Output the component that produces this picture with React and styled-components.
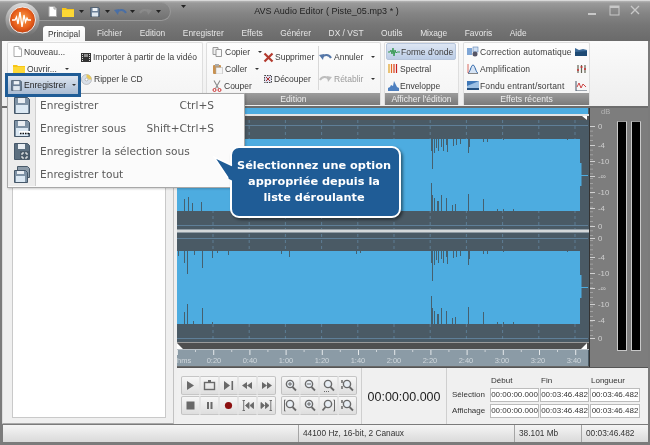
import React from "react";
import styled, { createGlobalStyle } from "styled-components";

const Global = createGlobalStyle`
  html, body { margin: 0; padding: 0; background: #777; }
  * { box-sizing: border-box; }
`;

const UI = `"Liberation Sans", Arial, sans-serif`;
const WIDE = `"DejaVu Sans", Verdana, sans-serif`;

const Win = styled.div`
  position: relative; width: 650px; height: 445px; overflow: hidden;
  display: flex; flex-direction: column; filter: blur(0.3px);
  background: #7b7b7b; font-family: ${UI}; font-size: 8.5px; color: #3a3a3a;
`;

/* ---------- title bar ---------- */
const TitleBar = styled.div`
  height: 25px; flex: none; display: flex; align-items: flex-start; position: relative;
  background: linear-gradient(#b5b5b5 0, #9a9a9a 2px, #858585 12px, #767676 100%);
  border-top: 1px solid #d8d8d8;
`;
const LogoWrap = styled.div`
  position: absolute; left: 5px; top: 1px; z-index: 3; width: 36px; height: 36px;
`;
const Quick = styled.div`
  margin-left: 28px; margin-top: 1px; width: 143px; height: 19px; padding-left: 19px;
  display: flex; align-items: center;
  background: linear-gradient(#8b8b8b, #717171);
  border: 1px solid #989898; border-left: none; border-radius: 0 10px 10px 0;
`;
const QuickIcon = styled.span`
  display: inline-flex; width: ${p => p.$w}px; justify-content: center; align-items: center; opacity: ${p => p.$dim ? 0.45 : 1};
`;
const Custom = styled.span`
  display: inline-flex; margin: 4px 0 0 10px; 
`;
const Title = styled.div`
  position: absolute; left: 0; right: 0; top: 5px; text-align: center; padding-left: 3px;
  font-size: 9px; color: #222; letter-spacing: 0.05px;
`;
const Controls = styled.div`
  margin-left: auto; margin-right: 8px; margin-top: 3px; display: flex; gap: 8px; align-items: center;
`;

/* ---------- tabs ---------- */
const Tabs = styled.div`
  height: 16px; flex: none; padding-left: 43px; display: flex; align-items: flex-end;
  background: linear-gradient(#767676, #6a6a6a);
`;
const Tab = styled.div`
  height: ${p => p.$on ? 15 : 16}px; display: flex; align-items: center; padding: 0 ${p => p.$on ? 5 : 8.8}px; 
  margin-right: ${p => p.$on ? 3 : 0}px;
  font-size: 8.4px; white-space: nowrap;
  color: ${p => p.$on ? "#333" : "#e6e6e6"};
  background: ${p => p.$on ? "linear-gradient(#ffffff, #f4f4f4)" : "transparent"};
  border-radius: ${p => p.$on ? "3px 3px 0 0" : 0};
`;

/* ---------- ribbon ---------- */
const Ribbon = styled.div`
  height: 67px; flex: none; margin: 0 2px; padding: 1px 0 0 5px; display: flex;
  background: linear-gradient(#fafafa, #eeeeee);
  border-bottom: 2px solid #6c6c6c;
`;
const Group = styled.div`
  width: ${p => p.$w}px; margin-right: ${p => p.$mr}px; height: 63px; display: flex; flex-direction: column;
  border: 1px solid #dedede; border-bottom: none; border-radius: 2px 2px 0 0;
  background: linear-gradient(#fdfdfd, #f3f3f3);
`;
const GroupBody = styled.div`
  height: 50px; flex: none; display: flex; padding-left: ${p => p.$pl || 5}px; letter-spacing: ${p => p.$ls || 0}px;
`;
const GroupLabel = styled.div`
  height: 12px; flex: none; text-align: center; line-height: 12px; font-size: 8.6px; color: #eee;
  background: linear-gradient(#9c9c9c, #7a7a7a);
`;
const Col = styled.div`
  width: ${p => p.$w}px; flex: none; display: flex; flex-direction: column; justify-content: ${p => p.$two ? "center" : "flex-start"};
  border-right: ${p => p.$div ? "1px solid #d8d8d8" : "none"};
  margin: ${p => p.$div ? "3px 0" : 0};
`;
const Item = styled.div`
  height: ${p => p.$two ? 22 : 17}px; flex: none; display: flex; align-items: center; gap: ${p => p.$gap ?? 2}px; white-space: nowrap;
  color: ${p => p.$dim ? "#9a9a9a" : "#3a3a3a"};
  ${p => p.$on ? `
    background: linear-gradient(#dde6f3, #bccde6); border: 1px solid #b7c6dc; border-radius: 2px; margin-left: -2px; padding-left: 1px; width: 70px;
  ` : ""}
`;
const Drop = styled.span`
  width: 0; height: 0; margin-left: ${p => p.$ml || 6}px; border: 2px solid transparent; border-top: 2.5px solid #333; border-bottom: none;
`;
const Push = styled.span` margin-left: auto; display: inline-flex; padding-right: 2px; `;
/* the picked ribbon button: its blue frame reaches over the group edge and the menu */
const Picked = styled.div`
  position: relative; z-index: 6; flex: none; width: 76px; height: 24px; margin: -4px 0 -3px -8px;
  border: 3px solid #1f5c96; display: flex; align-items: center; gap: 2px; padding-left: 3px; font-size: 8.6px; color: #222; white-space: nowrap;
  background: linear-gradient(#dde5f0, #a9bbd2);
`;

/* ---------- main ---------- */
const Main = styled.div`
  flex: 1; min-height: 0; display: flex; margin: 0 2px 0 2px; background: #efefef;
`;
const LeftPane = styled.div`
  width: 172px; flex: none; padding: 3px 7px 5px 9px; margin-right: 3px; background: #efefef; border: 1px solid #c2c2c2; border-top: none; border-bottom: 1px solid #aaa; border-left-color:#ddd;
`;
const WhiteBox = styled.div`
  height: 100%; background: #fff; border: 1px solid #c9c9c9;
`;
const RightCol = styled.div`
  flex: 1; min-width: 0; display: flex; flex-direction: column;
`;
const TopArea = styled.div`
  height: 260px; flex: none; display: flex; border-bottom: 1px solid #555; background:#7d7d7d;
`;
const WaveSvg = styled.svg`
  display: block; width: 412px; height: 259px; flex: none;
`;
const Meter = styled.div`
  flex: 1; display: flex; background: #7d7d7d; border-left: 1px solid #333; padding-right: 2px;
`;
const ScaleSvg = styled.svg`
  display: block; width: 27px; height: 259px; flex: none;
`;
const MeterBar = styled.div`
  width: 10px; flex: none; height: 230px; margin: 13px ${p => p.$mr}px 0 0; background: #000; border: 1px solid #c9c9c9; border-top-color:#999;
`;

/* ---------- transport ---------- */
const Transport = styled.div`
  flex: 1; display: flex; background: #f0f0f0; padding-right: 2px;
`;
const PadArea = styled.div`
  width: 185px; flex: none; display: flex; gap: 5px; padding: 8px 0 0 4px; border-right: 1px solid #cfcfcf;
`;
const BtnGrid = styled.div`
  display: grid; grid-template-columns: repeat(${p => p.$n}, 19px); grid-auto-rows: 19px; row-gap: 1px; height: 39px;
`;
const Btn = styled.div`
  display: flex; align-items: center; justify-content: center;
  background: linear-gradient(#f7f7f7, #dedede);
  border: 1px solid #c6c6c6; border-left-color: #e4e4e4; border-right-color: #e4e4e4;
  &:nth-child(${p => p.$n}n+1) { border-left-color: #c0c0c0; border-radius: 2px 0 0 2px; }
  &:nth-child(${p => p.$n}n) { border-right-color: #c0c0c0; border-radius: 0 2px 2px 0; }
`;
const Clock = styled.div`
  width: 85px; flex: none; display: flex; align-items: center; justify-content: center; padding-top: 1px;
  font-size: 12.5px; color: #222; border-right: 1px solid #cfcfcf;
`;
const Times = styled.div`
  flex: 1; display: grid; grid-template-columns: 37px 49px 49px 50px; column-gap: 1px; grid-template-rows: 14px 15px 15px; padding: 4px 0 0 5px; align-items: center; row-gap: 1px;
  font-size: 8px;
`;
const THead = styled.div` padding-left: 1px; padding-top: 2px; color: #333; `;
const TLabel = styled.div` text-align: right; padding-right: 6px; color: #333; `;
const Field = styled.div`
  height: 14px; line-height: 12px; background: #fff; border: 1px solid #bcbcbc; text-align: center; font-size: 8px; color: #333; white-space: nowrap;
`;

/* ---------- status ---------- */
const Status = styled.div`
  height: 17px; flex: none; margin: 1px 2px 3px 3px; display: flex; font-size: 8.3px; color: #333;
  background: linear-gradient(#f5f5f5, #dadada);
`;
const Cell = styled.div`
  width: ${p => p.$w}px; flex: ${p => p.$w ? "none" : 1}; padding-left: 4px; line-height: 17px; white-space: nowrap;
  border-left: ${p => p.$w ? "1px solid #a5a5a5" : "none"};
`;

/* ---------- overlays ---------- */
const Menu = styled.div`
  position: absolute; left: 7px; top: 93px; width: 238px; height: 95px; z-index: 5;
  background: #fbfbfb; border: 1px solid #a8a8a8;
  box-shadow: 1px 1px 2px rgba(0,0,0,.2);
`;
const MenuRow = styled.div`
  height: 23px; display: flex; align-items: center; font-family: ${WIDE}; font-size: 10.6px; color: #5a5a5a;
  padding-right: 30px;
`;
const MenuText = styled.span` margin-top: -1px; `;
const Gutter = styled.div`
  width: 28px; height: 23px; flex: none; margin-right: 4px; display: flex; align-items: center; justify-content: center;
  background: #ececec; border-right: 1px solid #cfcfcf;
`;
const Short = styled.span` margin-left: auto; margin-top: -1px; `;
const Callout = styled.div`
  position: absolute; left: 230px; top: 146px; width: 171px; height: 72px; z-index: 7; padding-right: 3px;
  display: flex; align-items: center; justify-content: center; text-align: center;
  font-family: ${WIDE}; font-size: 11.3px; font-weight: 700; line-height: 16px; color: #fff;
  background: #1f5c96; border: 2px solid #fff; border-radius: 9px; box-shadow: 2px 2px 3px rgba(0,0,0,.45);
`;
const Tail = styled.svg`
  position: absolute; left: -19px; top: 8px; width: 20px; height: 30px;
`;

/* ---------- icons ---------- */
const S = ({ w = 10, h = 10, vb, children }) => (
  <svg width={w} height={h} viewBox={vb || `0 0 ${w} ${h}`} style={{ flex: "none", display: "block" }}>{children}</svg>
);
const Doc = () => <S w={9} h={11}><path d="M1 .5h5l2.500 2.500v7.500h-7.500z" fill="#fff" stroke="#aaa" /><path d="M6 .5v2.500h2.500" fill="#ddd" stroke="#aaa" /></S>;
const Folder = ({ w = 12, h = 10 }) => <S w={w} h={h} vb="0 0 12 10"><path d="M0 1h4l1 1h7v8H0z" fill="#f7c516" /><path d="M0 3h12v7H0z" fill="#fdd835" /></S>;
const Floppy = ({ s = 10, c = "#6b7f96" }) => <S w={s} h={s} vb="0 0 10 10"><path d="M.5.5h8l1 1v8h-9z" fill={c} stroke="#3f4f60" strokeWidth=".6" /><rect x="2.500" y="1" width="5" height="3" fill="#eef2f6" /><rect x="2" y="5.500" width="6" height="4" fill="#dfe7ef" /></S>;
const Film = () => <S w={10} h={11}><rect y="1" width="10" height="9" fill="#333" /><path d="M1 2h1v1H1zm0 2h1v1H1zm0 2h1v1H1zm0 2h1v1H1zm7-6h1v1H8zm0 2h1v1H8zm0 2h1v1H8zm0 2h1v1H8z" fill="#ddd" /><rect x="3" y="2" width="4" height="3" fill="#8a8a8a" /></S>;
const Cd = () => <S w={11} h={11}><circle cx="5.500" cy="5.500" r="5" fill="#d8dfe8" stroke="#999" strokeWidth=".5" /><path d="M5.500 .5a5 5 0 0 1 5 5h-3a2 2 0 0 0-2-2z" fill="#e8c95a" /><circle cx="5.500" cy="5.500" r="1.400" fill="#fff" stroke="#888" strokeWidth=".5" /></S>;
const Copy = () => <S w={11} h={11}><path d="M1 1.500h5v7H1z" fill="#eee" stroke="#999" /><path d="M4 3.500h5.500v7H4z" fill="#fafafa" stroke="#999" /></S>;
const Paste = () => <S w={11} h={11}><rect x="1" y="2" width="8" height="9" rx="1" fill="#c8914f" /><rect x="3" y="1" width="4" height="2.500" fill="#aaa" /><rect x="4" y="4.500" width="6.500" height="6.500" fill="#f4f4f4" stroke="#aaa" strokeWidth=".5" /></S>;
const Scissors = () => <S w={10} h={12}><path d="M2 .5l4.500 8M8 .5l-4.500 8" stroke="#8b8b8b" strokeWidth="1.100" fill="none" /><circle cx="2.500" cy="10" r="1.500" fill="none" stroke="#c33" strokeWidth="1" /><circle cx="7.500" cy="10" r="1.500" fill="none" stroke="#c33" strokeWidth="1" /></S>;
const Del = () => <S w={11} h={11}><path d="M1.500 1.500l8 8M9.500 1.500l-8 8" stroke="#b33a2e" strokeWidth="2.200" /></S>;
const Trim = () => <S w={10} h={10}><rect x="1.500" y="1.500" width="7" height="7" fill="#dde" stroke="#444" strokeWidth="1" strokeDasharray="1.500 1" /><path d="M3 3l4 4M7 3l-4 4" stroke="#a33" strokeWidth="1" /></S>;
const Undo = ({ c = "#4a6fa5" }) => <S w={13} h={10}><path d="M3 5.500c2-3.500 7-3.500 9 .5" fill="none" stroke={c} strokeWidth="2" /><path d="M0 3l5-1-1 6z" fill={c} /></S>;
const Redo = ({ c = "#bdbdbd" }) => <S w={13} h={10}><path d="M10 5.500c-2-3.500-7-3.500-9 .5" fill="none" stroke={c} strokeWidth="2" /><path d="M13 3L8 2l1 6z" fill={c} /></S>;
const WaveI = () => <S w={12} h={10}><path d="M0 5h2l1-2 1 4 1-6 1 8 1-6 1 3 1-1h3" fill="none" stroke="#3a9b55" strokeWidth="1" /></S>;
const Spec = () => <S w={11} h={11}><path d="M1 1v9" stroke="#e0a020" strokeWidth="1.200" /><path d="M3.500 1v9" stroke="#e66a20" strokeWidth="1.200" /><path d="M6 1v9" stroke="#d8401c" strokeWidth="1.200" /><path d="M8.500 1v9" stroke="#c82020" strokeWidth="1.200" /></S>;
const Env = () => <S w={11} h={10}><path d="M0 10V7l2-1 1-2 2 1 1-5 2 4 1 2 2 1v3z" fill="#4e80c0" /></S>;
const Auto = () => <S w={12} h={11}><rect x="0" y="2" width="5" height="7" fill="#7fa6d6" /><rect x="6" y="1" width="5" height="5" fill="#cfdff2" stroke="#5a7fb0" strokeWidth=".6" /><circle cx="8" cy="8" r="2.500" fill="#556" /></S>;
const Ampl = () => <S w={12} h={11}><path d="M1 10.500h10" stroke="#888" /><path d="M1 10c2 0 3-8 5-8s3 8 5 8" fill="#d6e4f5" stroke="#2b62a6" /><path d="M1 1v9" stroke="#d0473a" strokeWidth=".8" /></S>;
const Fade = () => <S w={12} h={9}><rect width="12" height="9" fill="#3f78b8" /><path d="M0 9V5l12-5v9z" fill="#9cc0e4" /><rect y="7" width="12" height="2" fill="#24507f" /></S>;
const Side = ({ k }) => k === 0
  ? <S w={12} h={10}><path d="M0 1l4 2 4-1 4 1v6H0z" fill="#3d6b99" /><path d="M0 5l12-1v5H0z" fill="#1e4a74" /></S>
  : k === 1
    ? <S w={11} h={10}><path d="M2 1v8M5.500 1v8M9 1v8" stroke="#665" strokeWidth="1.200" /><path d="M1 6h2M4.500 3h2M8 5h2" stroke="#c33" strokeWidth="1.600" /></S>
    : <S w={12} h={10}><path d="M1 0v10h11" stroke="#456" fill="none" /><path d="M2 6l2-4 2 5 2-4 3 3" stroke="#c44" fill="none" /></S>;

const BigFloppy = ({ kind }) => (
  <S w={16} h={17}>
    {kind === 3 && <path d="M3.500.5h10l2 2v9h-12z" fill="#8d9caa" stroke="#4a5b6a" />}
    <path d={kind === 3 ? "M.5 4.500h11l2 2v10H.5z" : "M.5.5h13l2 2v14H.5z"} fill={kind === 2 ? "#5c6f80" : "#7e92a5"} stroke="#46586a" />
    <rect x={kind === 3 ? 3 : 4} y={kind === 3 ? 5 : 1} width="7" height={kind === 3 ? 3 : 5} fill="#e9eef3" />
    {kind !== 2 && <rect x="2" y={kind === 3 ? 10 : 8} width={kind === 3 ? 9 : 12} height={kind === 3 ? 6 : 8} fill="#dbe8f3" />}
    {kind === 1 && <rect x="5" y="11" width="11" height="2" fill="#fff" />}
    {kind === 1 && <path d="M6 13.500h10" stroke="#111" strokeWidth="1.400" strokeDasharray="1.500 1" />}
    {kind === 2 && <g><rect x="6" y="8" width="9" height="9" fill="#4a5a68" /><path d="M8 12v-2h2M13 12v-2h-2M8 13v2h2M13 13v2h-2" stroke="#fff" fill="none" /></g>}
  </S>
);

const ic = "#696969";
const TIcon = ({ k }) => {
  const d = {
    play: <path d="M3 2l7 4.500L3 11z" fill={ic} />,
    loop: <g><rect x="1.500" y="3.500" width="10" height="7" fill="none" stroke={ic} strokeWidth="1.400" /><path d="M5 1h3v3H5z" fill={ic} /></g>,
    next: <g><path d="M2 2l6 4.500L2 11z" fill={ic} /><rect x="9.500" y="2" width="1.600" height="9" fill={ic} /></g>,
    rew: <path d="M6 3v7L1 6.500zM11 3v7L6 6.500z" fill={ic} />,
    ff: <path d="M2 3v7l5-3.500zM7 3v7l5-3.500z" fill={ic} />,
    stop: <rect x="2.500" y="2.500" width="8" height="8" fill={ic} />,
    pause: <path d="M4 3h2v7H4zM7.500 3h2v7h-2z" fill={ic} />,
    rec: <circle cx="6.500" cy="6.500" r="3.600" fill="#8c1010" />,
    first: <path d="M1.500 1.500h2.500M2.700 1.500v10M1.500 11.500h2.500M8 3.500v6L4.500 6.500zM12.500 3.500v6L9 6.500z" fill={ic} stroke={ic} strokeWidth=".9" />,
    last: <path d="M9.500 1.500h2.500M10.800 1.500v10M9.500 11.500h2.500M1 3.500v6l3.500-3zM5.500 3.500v6l3.500-3z" fill={ic} stroke={ic} strokeWidth=".9" />,
  }[k];
  return <S w={13} h={13}>{d}</S>;
};
const Mag = ({ k }) => (
  <S w={13} h={13}>
    <circle cx="6" cy="5" r="3.600" fill="#e8eef4" stroke={ic} strokeWidth="1.400" />
    {k === "r" ? <path d="M3.500 8l-3 3.500" stroke={ic} strokeWidth="1.800" /> : <path d="M8.500 8l3.500 3.500" stroke={ic} strokeWidth="1.800" />}
    {k === "in" && <path d="M4 5h4M6 3v4" stroke={ic} />}
    {k === "out" && <path d="M4 5h4" stroke={ic} />}
    {k === "sel" && <path d="M2 12.500h6" stroke={ic} strokeDasharray="1 1" />}
    {k === "v" && <path d="M1 1v3M1 7v3" stroke={ic} strokeWidth="1.500" />}
    {k === "l" && <path d="M1.500 1H.5v11h1" stroke={ic} fill="none" />}
    {k === "r" && <path d="M11.500 1h1v11h-1" stroke={ic} fill="none" />}
  </S>
);

const Logo = () => (
  <svg width="36" height="36" viewBox="0 0 36 36">
    <defs>
      <radialGradient id="lo" cx=".5" cy=".45" r=".6"><stop offset="0" stopColor="#f9a450" /><stop offset=".6" stopColor="#e8601c" /><stop offset="1" stopColor="#b8380c" /></radialGradient>
      <linearGradient id="ri" x1="0" y1="0" x2="0" y2="1"><stop offset="0" stopColor="#dcdcdc" /><stop offset="1" stopColor="#6a6a6a" /></linearGradient>
    </defs>
    <circle cx="17.500" cy="18" r="17" fill="url(#ri)" />
    <circle cx="17.500" cy="18" r="13" fill="url(#lo)" stroke="#eee" strokeWidth="1" />
    <path d="M7 18h3l1.500-3 1.500 7 2-12 2 15 2-12 1.500 7 1.500-4 1 2h3" fill="none" stroke="#fff" strokeWidth="1.300" />
  </svg>
);
const Arrow = ({ c = "#222" }) => <S w={5} h={3}><path d="M0 0h5L2.500 3z" fill={c} /></S>;

/* ---------- waveform ---------- */
const range = (a, n, s) => Array.from({ length: n }, (_, i) => a + i * s);
const spikesTop = [[431,12],[432,30],[434,14],[436,9],[438,12],[441,8],[443,12],[446,6],[447,13],[453,7],[456,6],[460,5],[468,14],[469,8],[483,3],[487,3],[503,1],[567,1]];
const spikesBot = [[184,12],[188,14],[192,8],[201,9],[431,28],[432,16],[434,13],[437,10],[438,10],[441,16],[446,13],[452,6],[455,7],[468,17],[483,12],[497,2],[503,2],[513,2]];
const spikes2Top = [[178,5],[184,12],[187,23],[194,4],[202,17],[212,7],[217,2],[228,4],[281,3],[289,6],[356,3],[360,2],...spikesTop];
const spikes2Bot = [[184,12],[187,20],[193,3],[202,16],[212,2],...spikesBot.slice(4)];
const Slate = "#4a5a65";
const Blue = "#4dace0";

const Wave = () => (
  <WaveSvg viewBox="177 110 412 259">
    <rect x="177" y="110" width="412" height="259" fill={Slate} />
    <rect x="177" y="110" width="411" height="6" fill={Blue} />
    <rect x="177" y="116" width="412" height="2" fill="#e5e5e5" />
    <rect x="177" y="118" width="412" height="4" fill="#545454" />
    <path d="M582 118h5v4z" fill="#fff" />
    {[127, 227, 240, 340].map(y => <rect key={y} x="177" y={y} width="411" height="1" fill="#5f7f98" />)}
    {range(213, 11, 36.2).map(x => <line key={x} x1={x} x2={x} y1="122" y2="344" stroke="#6a94b4" strokeDasharray="3 3" strokeWidth="1" opacity=".6" />)}
    <rect x="177" y="141" width="403" height="72" fill={Blue} />
    <rect x="177" y="253" width="403" height="73" fill={Blue} />
    <rect x="580" y="165" width="1.500" height="23" fill={Blue} />
    <rect x="580" y="277" width="1.500" height="23" fill={Blue} />
    <rect x="580" y="177" width="8" height="1" fill={Blue} />
    <rect x="580" y="289" width="8" height="1" fill={Blue} />
    {spikesTop.map(([x, l]) => <rect key={x} x={x} y="141" width="1" height={l} fill="#46606f" />)}
    {spikesBot.map(([x, l]) => <rect key={x} x={x} y={213 - l} width="1" height={l} fill="#46606f" />)}
    {spikes2Top.map(([x, l]) => <rect key={x} x={x} y="253" width="1" height={l} fill="#46606f" />)}
    {spikes2Bot.map(([x, l]) => <rect key={x} x={x} y={326 - l} width="1" height={l} fill="#46606f" />)}
    <rect x="177" y="231" width="412" height="1" fill="#8f9ba4" />
    <rect x="177" y="232" width="412" height="2" fill="#d4d8da" />
    <rect x="177" y="234" width="412" height="1" fill="#8f9ba4" />
    <rect x="177" y="344" width="412" height="1" fill="#9a9a9a" />
    <rect x="177" y="345" width="412" height="6" fill="#4f4f4f" />
    <path d="M177 345l6 6h-6zM587 345l-6 6h6z" fill="#fff" />
    <rect x="177" y="351" width="412" height="1" fill="#b8c0c6" />
    <rect x="177" y="352" width="411" height="16" fill="#8b9ba6" />
    {range(177, 12, 36.2).map(x => <rect key={x} x={x} y="352" width="1" height="5" fill="#e4e8ea" />)}
    {range(195, 12, 36.2).map(x => <rect key={x} x={x} y="352" width="1" height="2" fill="#ccd3d8" />)}
    <g fontFamily={UI} fontSize="7.500" fill="#d0d7dc">
      <text x="177" y="365">hms</text>
      {["0:20", "0:40", "1:00", "1:20", "1:40", "2:00", "2:20", "2:40", "3:00", "3:20", "3:40"].map((t, i) => (
        <text key={t} x={214 + i * 36} y="365" textAnchor="middle">{t}</text>
      ))}
    </g>
    <rect x="177" y="368" width="412" height="1" fill="#666" />
  </WaveSvg>
);

const ticks = [128, 147, 163, 178, 194, 210, 228, 240, 259, 275, 290, 306, 322, 340];
const labels = ["0", "-4", "-10", "-\u221E", "-10", "-4", "0", "0", "-4", "-10", "-\u221E", "-10", "-4", "0"];
const Scale = () => (
  <ScaleSvg viewBox="589 110 27 259">
    <text x="600" y="116" fontFamily={UI} fontSize="7.500" fill="#b5b5b5">dB</text>
    {range(128, 45, 4.750).map(y => <rect key={y} x="589" y={y} width="3" height=".7" fill="#b0b0b0" />)}
    {ticks.map((y, i) => (
      <g key={y}>
        <rect x="589" y={y} width="5" height="1" fill="#d0d0d0" />
        <text x="597" y={y + 3} fontFamily={UI} fontSize="7.800" fill="#cfcfcf">{labels[i]}</text>
      </g>
    ))}
  </ScaleSvg>
);

const Row1 = ["Principal", "Fichier", "Edition", "Enregistrer", "Effets", "Générer", "DX / VST", "Outils", "Mixage", "Favoris", "Aide"];
const transport = ["play", "loop", "next", "rew", "ff", "stop", "pause", "rec", "first", "last"];
const mags = ["in", "out", "sel", "v", "l", "in", "r", "v"];

export default function App() {
  return (
    <Win>
      <Global />
      <TitleBar>
        <LogoWrap><Logo /></LogoWrap>
        <Quick>
          <QuickIcon $w={11}><Doc /></QuickIcon>
          <QuickIcon $w={19}><Folder /></QuickIcon>
          <QuickIcon $w={8}><Arrow /></QuickIcon>
          <QuickIcon $w={19}><Floppy /></QuickIcon>
          <QuickIcon $w={7}><Arrow /></QuickIcon>
          <QuickIcon $w={18}><Undo /></QuickIcon>
          <QuickIcon $w={7}><Arrow /></QuickIcon>
          <QuickIcon $w={19} $dim><Redo c="#999" /></QuickIcon>
          <QuickIcon $w={7}><Arrow /></QuickIcon>
        </Quick>
        <Custom><Arrow /></Custom>
        <Title>AVS Audio Editor ( Piste_05.mp3 * )</Title>
        <Controls>
          <S w={13} h={12}><rect x="1" y="9" width="8" height="2" fill="#c8c8c8" /></S>
          <S w={13} h={12}><rect x="2" y="2" width="9" height="9" fill="none" stroke="#c8c8c8" strokeWidth="1" /><rect x="2" y="2" width="9" height="2" fill="#c8c8c8" /></S>
          <S w={13} h={12}><path d="M2 2l8 8M10 2l-8 8" stroke="#c8c8c8" strokeWidth="1.300" /></S>
        </Controls>
      </TitleBar>
      <Tabs>
        {Row1.map((t, i) => <Tab key={t} $on={i === 0}>{t}</Tab>)}
      </Tabs>
      <Ribbon>
        <Group $w={196} $mr={3}>
          <GroupBody>
            <Col $w={68}>
              <Item><Doc />Nouveau...</Item>
              <Item><Folder />Ouvrir...<Drop /></Item>
              <Picked><Floppy s={11} />Enregistrer<Drop $ml={4} /></Picked>
            </Col>
            <Col $w={120} $two>
              <Item $two><Film />Importer à partir de la vidéo</Item>
              <Item $two><Cd />Ripper le CD</Item>
            </Col>
          </GroupBody>
          <GroupLabel />
        </Group>
        <Group $w={175} $mr={3}>
          <GroupBody>
            <Col $w={51}>
              <Item><Copy />Copier<Drop /></Item>
              <Item><Paste />Coller<Drop /></Item>
              <Item><Scissors />Couper</Item>
            </Col>
            <Col $w={56} $two $div>
              <Item $two $gap={1}><Del />Supprimer</Item>
              <Item $two $gap={1}><Trim />Découper</Item>
            </Col>
            <Col $w={60} $two>
              <Item $two><Undo c="#5577a8" />Annuler<Drop /></Item>
              <Item $two $dim><Redo />Rétablir<Drop /></Item>
            </Col>
          </GroupBody>
          <GroupLabel>Edition</GroupLabel>
        </Group>
        <Group $w={75} $mr={4}>
          <GroupBody $pl={3}>
            <Col $w={70}>
              <Item $on $gap={1}><WaveI />Forme d'onde</Item>
              <Item $gap={1}><Spec />Spectral</Item>
              <Item $gap={1}><Env />Enveloppe</Item>
            </Col>
          </GroupBody>
          <GroupLabel>Afficher l'édition</GroupLabel>
        </Group>
        <Group $w={127} $mr={0}>
          <GroupBody $pl={3} $ls={0.15}>
            <Col $w={122}>
              <Item $gap={1}><Auto />Correction automatique<Push><Side k={0} /></Push></Item>
              <Item $gap={1}><Ampl />Amplification<Push><Side k={1} /></Push></Item>
              <Item $gap={1}><Fade />Fondu entrant/sortant<Push><Side k={2} /></Push></Item>
            </Col>
          </GroupBody>
          <GroupLabel>Effets récents</GroupLabel>
        </Group>
      </Ribbon>
      <Main>
        <LeftPane><WhiteBox /></LeftPane>
        <RightCol>
          <TopArea>
            <Wave />
            <Meter>
              <Scale />
              <MeterBar $mr={4} />
              <MeterBar $mr={0} />
            </Meter>
          </TopArea>
          <Transport>
            <PadArea>
              <BtnGrid $n={5}>
                {transport.map(k => <Btn key={k} $n={5}><TIcon k={k} /></Btn>)}
              </BtnGrid>
              <BtnGrid $n={4}>
                {mags.map((k, i) => <Btn key={i} $n={4}><Mag k={k} /></Btn>)}
              </BtnGrid>
            </PadArea>
            <Clock>00:00:00.000</Clock>
            <Times>
              <span />
              <THead>Début</THead>
              <THead>Fin</THead>
              <THead>Longueur</THead>
              <TLabel>Sélection</TLabel>
              <Field>00:00:00.000</Field>
              <Field>00:03:46.482</Field>
              <Field>00:03:46.482</Field>
              <TLabel>Affichage</TLabel>
              <Field>00:00:00.000</Field>
              <Field>00:03:46.482</Field>
              <Field>00:03:46.482</Field>
            </Times>
          </Transport>
        </RightCol>
      </Main>
      <Status>
        <Cell />
        <Cell $w={216}>44100 Hz, 16-bit, 2 Canaux</Cell>
        <Cell $w={67}>38.101 Mb</Cell>
        <Cell $w={67}>00:03:46.482</Cell>
      </Status>

      <Menu>
        <MenuRow><Gutter><BigFloppy kind={0} /></Gutter><MenuText>Enregistrer</MenuText><Short>Ctrl+S</Short></MenuRow>
        <MenuRow><Gutter><BigFloppy kind={1} /></Gutter><MenuText>Enregistrer sous</MenuText><Short>Shift+Ctrl+S</Short></MenuRow>
        <MenuRow><Gutter><BigFloppy kind={2} /></Gutter><MenuText>Enregistrer la sélection sous</MenuText></MenuRow>
        <MenuRow><Gutter><BigFloppy kind={3} /></Gutter><MenuText>Enregistrer tout</MenuText></MenuRow>
      </Menu>
      <Callout>
        <Tail viewBox="0 0 20 30">
          <path d="M20 10L1 1l15 22 4 2z" fill="#1f5c96" />
          <path d="M19 9.500L1 1l14 21" fill="none" stroke="#fff" strokeWidth="1.500" />
        </Tail>
        <div>Sélectionnez une option<br />appropriée depuis la<br />liste déroulante</div>
      </Callout>
    </Win>
  );
}
